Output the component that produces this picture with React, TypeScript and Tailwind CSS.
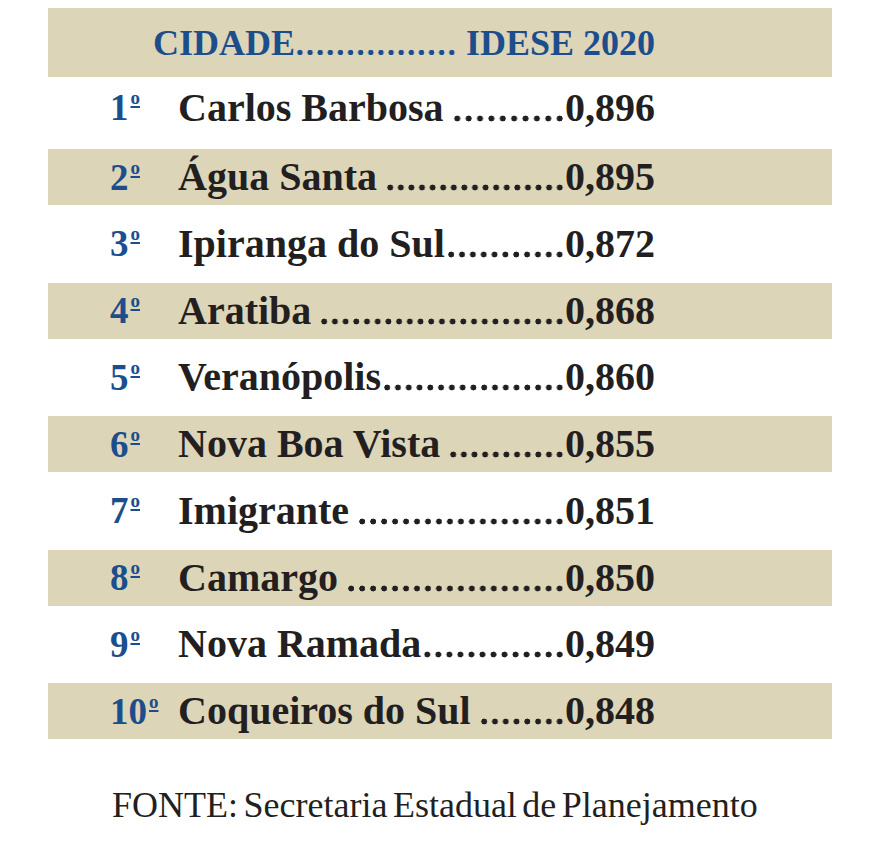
const rows = [
  { pos: "1", name: "Carlos Barbosa", space: true, value: "0,896" },
  { pos: "2", name: "Água Santa", space: true, value: "0,895" },
  { pos: "3", name: "Ipiranga do Sul", space: false, value: "0,872" },
  { pos: "4", name: "Aratiba", space: true, value: "0,868" },
  { pos: "5", name: "Veranópolis", space: false, value: "0,860" },
  { pos: "6", name: "Nova Boa Vista", space: true, value: "0,855" },
  { pos: "7", name: "Imigrante", space: true, value: "0,851" },
  { pos: "8", name: "Camargo", space: true, value: "0,850" },
  { pos: "9", name: "Nova Ramada", space: false, value: "0,849" },
  { pos: "10", name: "Coqueiros do Sul", space: true, value: "0,848" },
];

const App = () => {
  return (
    <div
      className="w-[871px] min-h-[846px] bg-white pt-[8px] text-[#231f20]"
      style={{ fontFamily: '"Liberation Serif", "Times New Roman", serif' }}
    >
      <div className="ml-[48px] w-[784px]">
        <div className="h-[69px] bg-[#ddd5b8] flex items-center pl-[105px]">
          <div className="w-[502px] h-[36px] flex text-[36px] leading-none font-bold text-[#1d4e8c]">
            <span>CIDADE</span>
            {/* leader: whole dots only, spread to fill */}
            <span className="flex-1 mr-[9px] bg-[radial-gradient(circle,#1d4e8c_2.5px,transparent_3px)] bg-[length:10px_7px] [background-repeat:space_no-repeat] bg-[position:0_24px]" />
            <span>IDESE 2020</span>
          </div>
        </div>

        {rows.map((row, index) => {
          const shaded = index % 2 === 1;
          const height = index === 0 ? "h-[72px] pb-[11px]" : shaded ? "h-[56px]" : "h-[77.5px]";
          return (
            <div
              key={index}
              className={`${height} flex items-center pl-[62px] ${shaded ? "bg-[#ddd5b8]" : ""}`}
            >
              <span className="w-[68px] flex items-start font-bold text-[#1d4e8c]">
                <span className="text-[37px] leading-none">{row.pos}</span>
                <span className="ml-[2px] -mt-[1px] text-[19px] leading-none underline decoration-[2px] underline-offset-[2px]">
                  o
                </span>
              </span>
              <div className="w-[477px] h-[40px] flex text-[40px] leading-none font-bold">
                <span>{row.name}</span>
                <span
                  className={`flex-1 ${row.space ? "ml-[8px]" : "ml-[1px]"} bg-[radial-gradient(circle,#231f20_2.7px,transparent_3.2px)] bg-[length:10.5px_7px] [background-repeat:space_no-repeat] bg-[position:0_27px]`}
                />
                <span>{row.value}</span>
              </div>
            </div>
          );
        })}
      </div>

      <p className="mt-[48px] pl-[112px] text-[36px] leading-none [word-spacing:-3.5px] whitespace-nowrap">
        FONTE: Secretaria Estadual de Planejamento
      </p>
    </div>
  );
};

export default App;
